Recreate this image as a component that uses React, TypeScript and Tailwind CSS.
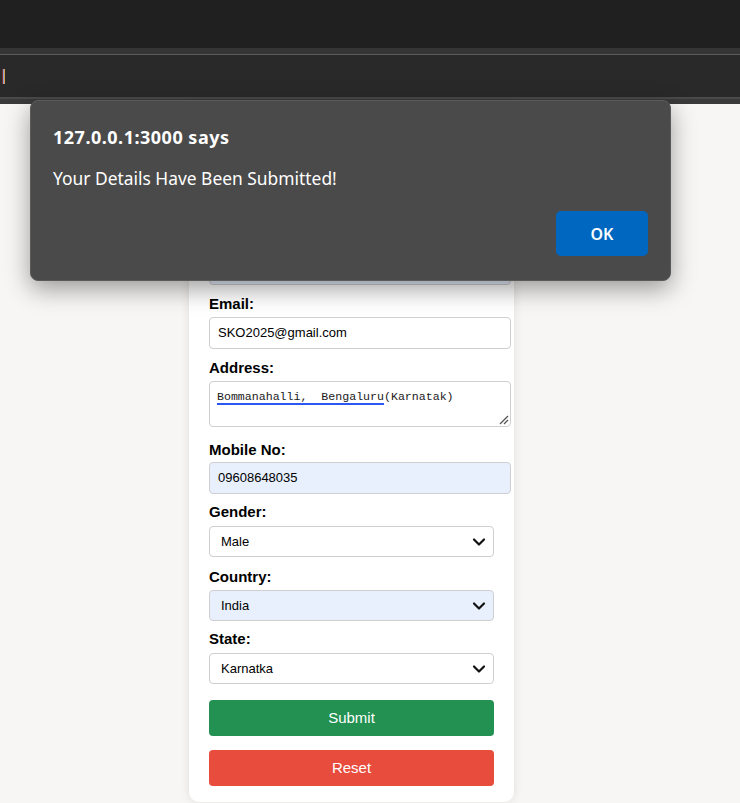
import React from "react";

const Chevron = () => (
  <svg width="14" height="10" viewBox="0 0 14 10" className="absolute right-[7px] top-1/2 -translate-y-1/2">
    <polyline points="2,2.5 7,7.5 12,2.5" fill="none" stroke="#111" strokeWidth="2.2" strokeLinecap="round" strokeLinejoin="round" />
  </svg>
);

const Select = ({ value, blue }: { value: string; blue?: boolean }) => (
  <div
    className={`relative w-[285px] h-[31px] rounded-[4px] border border-[#cfcfcf] flex items-center pl-[11px] text-[13px] text-black ${
      blue ? "bg-[#e8f0fe]" : "bg-white"
    }`}
  >
    {value}
    <Chevron />
  </div>
);

const Label = ({ children, className }: { children: React.ReactNode; className?: string }) => (
  <div className={`h-[18px] leading-[18px] text-[15px] font-bold text-black ${className ?? ""}`}>{children}</div>
);

export default function App() {
  return (
    <div className="relative w-[740px] h-[803px] overflow-hidden bg-[#f7f6f4]" style={{ fontFamily: '"Liberation Sans", Arial, sans-serif' }}>
      {/* browser chrome */}
      <div className="h-[48px] bg-[#202020]" />
      <div className="h-[6px] bg-[#353535]" />
      <div className="h-[1px] bg-[#5c5c5c]" />
      <div className="h-[42px] bg-[#292929] flex items-center">
        <div className="ml-[2px] flex h-[15px]">
          <div className="w-[1px] bg-[#7d2a2a]" />
          <div className="w-[1px] bg-[#8da4d0]" />
          <div className="w-[1px] bg-[#d9a050]" />
        </div>
      </div>
      <div className="h-[2px] bg-[#4a4a4a]" />
      <div className="h-[5px] bg-[#3a3a3a]" />

      {/* page */}
      <div className="flex pl-[189px]">
        <div className="w-[325px] h-[698px] bg-white rounded-[10px] shadow-[0_0_10px_rgba(0,0,0,0.1)] px-[20px] flex flex-col">
          <Label className="mt-[126px]">Name:</Label>
          <div className="mt-[5px] w-[302px] h-[32px] rounded-[4px] border border-[#cfcfcf] bg-[#e8f0fe]" />

          <Label className="mt-[10px]">Email:</Label>
          <div className="mt-[4px] w-[302px] h-[32px] rounded-[4px] border border-[#cfcfcf] bg-white flex items-center pl-[8px] text-[13px] text-black">
            SKO2025@gmail.com
          </div>

          <Label className="mt-[10px]">Address:</Label>
          <div className="relative mt-[4px] w-[302px] h-[46px] rounded-[4px] border border-[#cfcfcf] bg-white pl-[7px] pt-[7px]">
            <div className="text-[11.6px] leading-[16px] text-[#1a1a1a] whitespace-pre" style={{ fontFamily: '"Liberation Mono", "Courier New", monospace' }}>
              <span className="underline decoration-[#2b57f2] decoration-2 underline-offset-[3px]">Bommanahalli,  Bengaluru</span>(Karnatak)
            </div>
            <svg width="10" height="10" viewBox="0 0 10 10" className="absolute right-[1px] bottom-[1px]">
              <line x1="1" y1="9" x2="9" y2="1" stroke="#555" strokeWidth="1.2" />
              <line x1="5" y1="9" x2="9" y2="5" stroke="#555" strokeWidth="1.2" />
            </svg>
          </div>

          <Label className="mt-[14px]">Mobile No:</Label>
          <div className="mt-[3px] w-[302px] h-[32px] rounded-[4px] border border-[#cfcfcf] bg-[#e8f0fe] flex items-center pl-[8px] text-[13px] text-black">
            09608648035
          </div>

          <Label className="mt-[9px]">Gender:</Label>
          <div className="mt-[5px]">
            <Select value="Male" />
          </div>

          <Label className="mt-[11px]">Country:</Label>
          <div className="mt-[4px]">
            <Select value="India" blue />
          </div>

          <Label className="mt-[9px]">State:</Label>
          <div className="mt-[5px]">
            <Select value="Karnatka" />
          </div>

          <div className="mt-[16px] w-[285px] h-[36px] rounded-[4px] bg-[#229151] text-white text-[15px] flex items-center justify-center">
            Submit
          </div>
          <div className="mt-[14px] w-[285px] h-[36px] rounded-[4px] bg-[#e74c3c] text-white text-[15px] flex items-center justify-center">
            Reset
          </div>
        </div>
      </div>

      {/* alert dialog */}
      <div
        className="absolute left-[30px] top-[100px] w-[641px] h-[181px] rounded-[8px] bg-[#4a4a4a] border border-[#5a5a5a] shadow-[0_8px_24px_rgba(0,0,0,0.38)]"
        style={{ fontFamily: '"Noto Sans", "Open Sans", sans-serif' }}
      >
        <div className="absolute left-[22px] top-[24px] text-[18px] tracking-[0.5px] font-bold text-white leading-[24px]">127.0.0.1:3000 says</div>
        <div className="absolute left-[22px] top-[65px] text-[17.4px] text-white leading-[24px]">Your Details Have Been Submitted!</div>
        <div className="absolute left-[525px] top-[110px] w-[92px] h-[45px] rounded-[5px] bg-[#0067c0] text-white font-semibold text-[16px] flex items-center justify-center">
          OK
        </div>
      </div>
    </div>
  );
}
